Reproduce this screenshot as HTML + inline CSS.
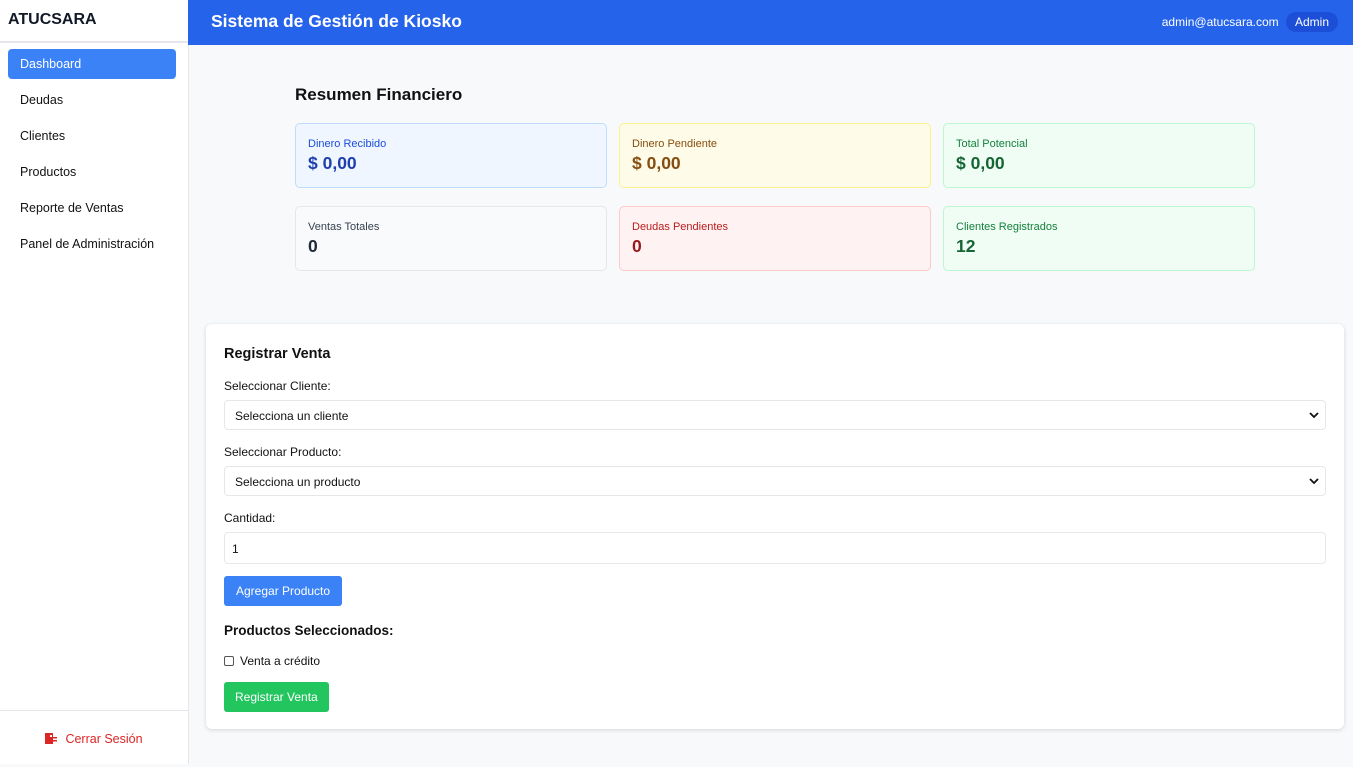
<!DOCTYPE html>
<html><head><meta charset="utf-8"><style>
*{box-sizing:border-box;margin:0;padding:0}
body{width:1353px;height:764px;overflow:hidden;font-family:"Liberation Sans",sans-serif;background:#f8f9fb;color:#111;position:relative}
.side{position:absolute;left:0;top:0;width:189px;height:764px;background:#fff;border-right:1px solid #e5e7eb}
.logo{height:43px;border-bottom:2px solid #e5e7eb;font-weight:bold;font-size:16px;padding:11px 8px;color:#111827}
.nav a{display:block;margin:0 12px 0 8px;height:30px;line-height:31px;padding-left:12px;font-size:12.5px;color:#111;margin-top:6px;border-radius:4px}
.nav a+a{margin-top:6px}
.nav a.act{background:#3b82f6;color:#fff}
.logout{position:absolute;bottom:0;left:0;width:188px;height:54px;border-top:1px solid #e5e7eb;text-align:center;font-size:12.5px;color:#dc2626;line-height:56px}
.logout svg{margin-right:8px;vertical-align:-1px}
.hdr{position:absolute;left:188px;top:0;right:0;height:45px;background:#2563eb;color:#fff}
.hdr h1{position:absolute;left:23px;top:11px;font-size:17.5px;font-weight:bold}
.hdr .u{position:absolute;right:15px;top:12px;font-size:12px}
.hdr .b{display:inline-block;background:#1d4ed8;border-radius:10px;padding:3px 9px;margin-left:4px}
h2{position:absolute;left:295px;top:85px;font-size:17px;font-weight:bold}
.card{position:absolute;width:312px;height:65px;border:1px solid;border-radius:5px;padding:14px 12px}
.card .l{font-size:11px}
.card .v{font-size:17.5px;margin-top:3px;font-weight:bold}
.panel{position:absolute;left:206px;top:324px;width:1138px;height:405px;background:#fff;border-radius:6px;box-shadow:0 1px 4px rgba(0,0,0,.15);padding:0 18px}
.panel h3{position:absolute;left:18px;top:22px;font-size:14.5px;font-weight:bold}
.lab{position:absolute;left:18px;font-size:12px}
.inp{position:absolute;left:18px;width:1102px;height:30px;border:1px solid #e5e7eb;border-radius:4px;font-size:12px;padding:8px 10px}
.inp svg{position:absolute;right:6px;top:10px}
.btn{position:absolute;left:18px;height:30px;line-height:31px;padding:0 12px;color:#fff;font-size:12px;border-radius:3px}
</style></head><body>
<div class="side">
<div class="logo">ATUCSARA</div>
<div class="nav">
<a class="act">Dashboard</a><a>Deudas</a><a>Clientes</a><a>Productos</a><a>Reporte de Ventas</a><a>Panel de Administración</a>
</div>
<div class="logout"><svg width="12" height="11" viewBox="0 0 12 11"><rect x="0" y="0" width="8" height="11" fill="#dc2626"/><rect x="8" y="4" width="4" height="1.5" fill="#dc2626"/><rect x="8" y="7" width="4" height="1.5" fill="#dc2626"/><rect x="5" y="2" width="2" height="2" fill="#fff"/></svg>Cerrar Sesión</div>
</div>
<div class="hdr"><h1>Sistema de Gestión de Kiosko</h1><div class="u">admin@atucsara.com <span class="b">Admin</span></div></div>
<h2>Resumen Financiero</h2>
<div class="card" style="left:295px;top:123px;background:#eff6ff;border-color:#bfdbfe"><div class="l" style="color:#1d4ed8">Dinero Recibido</div><div class="v" style="color:#1e40af">$ 0,00</div></div>
<div class="card" style="left:619px;top:123px;background:#fefce8;border-color:#fef08a"><div class="l" style="color:#854d0e">Dinero Pendiente</div><div class="v" style="color:#854d0e">$ 0,00</div></div>
<div class="card" style="left:943px;top:123px;background:#f0fdf4;border-color:#bbf7d0"><div class="l" style="color:#15803d">Total Potencial</div><div class="v" style="color:#166534">$ 0,00</div></div>
<div class="card" style="left:295px;top:206px;background:#f9fafb;border-color:#e5e7eb"><div class="l" style="color:#374151">Ventas Totales</div><div class="v" style="color:#1f2937">0</div></div>
<div class="card" style="left:619px;top:206px;background:#fef2f2;border-color:#fecaca"><div class="l" style="color:#b91c1c">Deudas Pendientes</div><div class="v" style="color:#991b1b">0</div></div>
<div class="card" style="left:943px;top:206px;background:#f0fdf4;border-color:#bbf7d0"><div class="l" style="color:#15803d">Clientes Registrados</div><div class="v" style="color:#166534">12</div></div>
<div class="panel">
<h3>Registrar Venta</h3>
<div class="lab" style="top:55px">Seleccionar Cliente:</div>
<div class="inp" style="top:76px">Selecciona un cliente<svg width="10" height="8" viewBox="0 0 10 8"><path d="M1 2l4 4 4-4" stroke="#111" stroke-width="1.8" fill="none"/></svg></div>
<div class="lab" style="top:121px">Seleccionar Producto:</div>
<div class="inp" style="top:142px">Selecciona un producto<svg width="10" height="8" viewBox="0 0 10 8"><path d="M1 2l4 4 4-4" stroke="#111" stroke-width="1.8" fill="none"/></svg></div>
<div class="lab" style="top:187px">Cantidad:</div>
<div class="inp" style="top:208px;height:32px;padding:9px 7px">1</div>
<div class="btn" style="top:252px;background:#3b82f6">Agregar Producto</div>
<div class="lab" style="top:299px;font-weight:bold;font-size:13.5px">Productos Seleccionados:</div>
<div class="lab" style="top:330px"><span style="display:inline-block;width:10px;height:10px;border:1px solid #555;border-radius:2px;margin-right:6px;vertical-align:-1px"></span>Venta a crédito</div>
<div class="btn" style="top:358px;background:#22c55e;padding:0 11px">Registrar Venta</div>
</div>
</body></html>
